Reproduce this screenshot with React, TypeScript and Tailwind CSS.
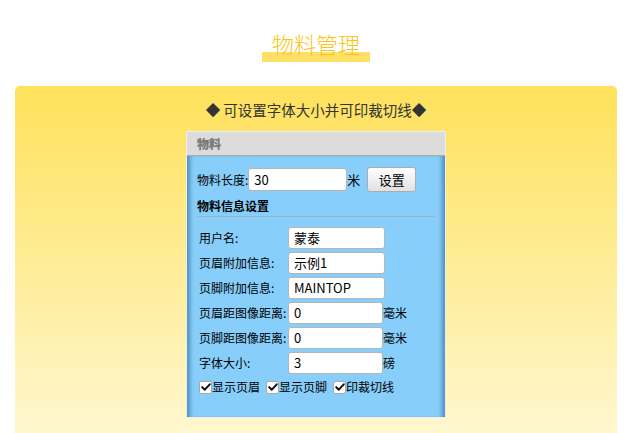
import React from 'react'

const font = "font-['Microsoft_YaHei','Noto_Sans_CJK_SC',sans-serif]"

function Field({ label, value, width = 'w-[97px]', unit }: { label: string; value: string; width?: string; unit?: string }) {
  return (
    <div className="flex items-center h-[25px]">
      <span className="w-[89px] shrink-0 whitespace-nowrap text-[12px] leading-[22px] text-black">{label}</span>
      <div className={`${width} h-[22px] shrink-0 rounded-[3px] border border-[#b5b5b5] bg-white pl-[5px] text-[13px] leading-[20px] text-black`}>
        {value}
      </div>
      {unit && <span className="whitespace-nowrap text-[12px] leading-[22px] text-black">{unit}</span>}
    </div>
  )
}

function Check({ label, first }: { label: string; first?: boolean }) {
  return (
    <label className={`flex items-center ${first ? '' : 'ml-[6px]'}`}>
      <span className="flex h-[13px] w-[13px] items-center justify-center rounded-[2px] border border-[#a8a8a8] bg-white">
        <svg viewBox="0 0 12 12" className="h-[10px] w-[10px]">
          <path d="M1.5 6.2 L4.6 9.2 L10.5 2.8" fill="none" stroke="#111" strokeWidth="2.4" strokeLinecap="round" strokeLinejoin="round" />
        </svg>
      </span>
      <span className="whitespace-nowrap text-[12px] leading-[20px] text-black">{label}</span>
    </label>
  )
}

export default function App() {
  return (
    <div className={`min-h-[433px] w-full bg-white ${font}`}>
      {/* 标题 */}
      <div className="flex h-[86px] justify-center pt-[31px]">
        <h1 className="h-[31px] w-[108px] bg-[linear-gradient(to_bottom,transparent_21px,#ffe066_21px)] text-center text-[22px] leading-[25px] font-light text-[#fcc414]">
          物料管理
        </h1>
      </div>

      {/* 黄色面板 */}
      <div className="mx-[15px] h-[347px] rounded-t-[5px] bg-[linear-gradient(to_bottom,#fee15b,#fff7cf)] pt-[14px]">
        <p className="text-center text-[14.5px] leading-[20px] text-[#333]">◆ 可设置字体大小并可印裁切线◆</p>

        <div className="mx-auto mt-[11px] w-[260px] border border-[#eeeeee] bg-white">
          <div className="h-[24px] border-b border-[#a9a9a9] bg-[#dcdcdc] pl-[10px] text-[12px] font-bold leading-[23px] text-[#777] [text-shadow:0_0_1px_#999]">
            物料
          </div>
          <div className="bg-[#87cefa] px-[10px] pt-[11px] pb-[20px] shadow-[inset_6px_0_4px_-3px_#4f8fba,inset_-6px_0_4px_-3px_#4f8fba]">
            <div className="flex h-[25px] items-center">
              <span className="whitespace-nowrap text-[12px] leading-[22px] text-black">物料长度:</span>
              <div className="h-[23px] w-[99px] rounded-[3px] border border-[#b5b5b5] bg-white pl-[5px] text-[13px] leading-[21px] text-black">30</div>
              <span className="text-[13px] leading-[22px] text-black">米</span>
              <button className="ml-[7px] h-[25px] w-[49px] rounded-[3px] border border-[#adadad] bg-[linear-gradient(to_bottom,#ffffff,#e1e1e1)] text-[13px] leading-[22px] text-black">
                设置
              </button>
            </div>
            <div className="mt-[5px] border-b border-[#9fb4c4] pb-[1px] text-[12px] font-bold leading-[18px] text-black">物料信息设置</div>

            <div className="mt-[8px] pl-[2px]">
              <Field label="用户名:" value="蒙泰" />
              <Field label="页眉附加信息:" value="示例1" />
              <Field label="页脚附加信息:" value="MAINTOP" />
              <Field label="页眉距图像距离:" value="0" width="w-[95px]" unit="毫米" />
              <Field label="页脚距图像距离:" value="0" width="w-[95px]" unit="毫米" />
              <Field label="字体大小:" value="3" width="w-[95px]" unit="磅" />
              <div className="mt-[2px] flex items-center">
                <Check label="显示页眉" first />
                <Check label="显示页脚" />
                <Check label="印裁切线" />
              </div>
            </div>
          </div>
        </div>
      </div>
    </div>
  )
}
